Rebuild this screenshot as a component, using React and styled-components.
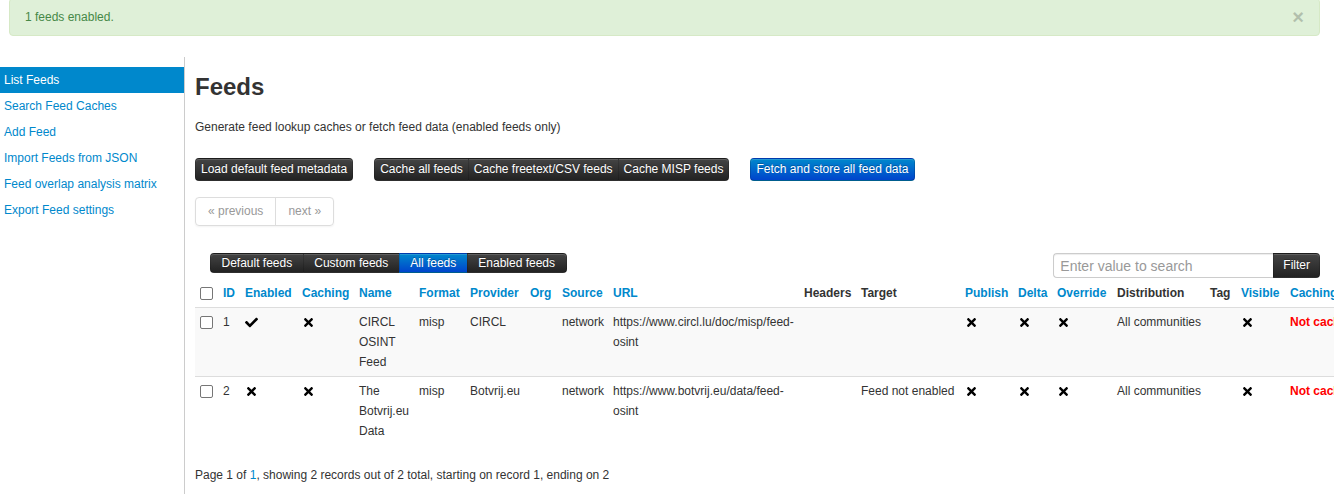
import React from "react"
import styled, { createGlobalStyle, css } from "styled-components"
import { FaCheck, FaTimes } from "react-icons/fa"

const GlobalStyle = createGlobalStyle`
  html, body {
    margin: 0;
    overflow: hidden;
  }
  body {
    font-family: "Liberation Sans", Arial, sans-serif;
    font-size: 12px;
    line-height: 20px;
    color: #333;
    background: #fff;
  }
  * {
    box-sizing: border-box;
  }
`

const Alert = styled("div")`
  display: flex;
  justify-content: space-between;
  align-items: center;
  margin: -2px 14px 21px 9px;
  padding: 8px 15px 8px 15px;
  background: #dff0d8;
  border: 1px solid #d6e9c6;
  border-radius: 4px;
  color: #468847;
`

const Close = styled("span")`
  font-size: 20px;
  font-weight: bold;
  line-height: 20px;
  color: #000;
  opacity: 0.2;
`

const Layout = styled("div")`
  display: flex;
  min-height: calc(100vh - 57px);
`

const Sidebar = styled("ul")`
  flex: 0 0 185px;
  margin: 0;
  padding: 10px 0 0;
  list-style: none;
  border-right: 1px solid #ccc;
`

const NavItem = styled("li")`
  padding: 3px 4px;
  line-height: 20px;
  color: #0088cc;
  ${(p) =>
    p.$active &&
    css`
      background: #0088cc;
      color: #fff;
    `}
`

const Main = styled("div")`
  flex: 1;
  min-width: 0;
  padding: 10px 14px 0 10px;
`

const Title = styled("h2")`
  margin: 0 0 10px;
  font-size: 24px;
  line-height: 40px;
  font-weight: bold;
  color: #333;
`

const Lead = styled("p")`
  margin: 0 0 21px;
`

const ActionBar = styled("div")`
  display: flex;
  gap: 21px;
  align-items: center;
`

const Btn = styled("span")`
  display: inline-block;
  padding: 0 5px;
  height: ${(p) => p.$h || 23}px;
  line-height: ${(p) => (p.$h || 23) - 2}px;
  color: #fff;
  text-shadow: 0 -1px 0 rgba(0, 0, 0, 0.25);
  white-space: nowrap;
  border: 1px solid rgba(0, 0, 0, 0.15);
  border-bottom-color: rgba(0, 0, 0, 0.3);
  border-radius: 4px;
  background-image: ${(p) =>
    p.$primary
      ? "linear-gradient(to bottom, #0088cc, #0044cc)"
      : "linear-gradient(to bottom, #444444, #222222)"};
  box-shadow: inset 0 1px 0 rgba(255, 255, 255, 0.15);
`

const BtnGroup = styled("div")`
  display: inline-flex;

  ${Btn} {
    border-radius: 0;
    padding: 0 ${(p) => p.$pad || 5}px;
  }
  ${Btn} + ${Btn} {
    margin-left: -1px;
  }
  ${Btn}:first-child {
    border-radius: 4px 0 0 4px;
  }
  ${Btn}:last-child {
    border-radius: 0 4px 4px 0;
  }
`

const Pager = styled("ul")`
  display: inline-flex;
  margin: 16px 0 0;
  padding: 0;
  list-style: none;
  border: 1px solid #ddd;
  border-radius: 4px;
  box-shadow: 0 1px 2px rgba(0, 0, 0, 0.05);
`

const PagerItem = styled("li")`
  padding: 3px 12px 4px;
  line-height: 20px;
  color: #999;
  & + & {
    border-left: 1px solid #ddd;
  }
`

const Toolbar = styled("div")`
  display: flex;
  justify-content: space-between;
  align-items: flex-start;
  margin-top: 27px;
  padding-left: 15px;
`

const Search = styled("div")`
  display: flex;
`

const SearchInput = styled("input")`
  width: 220px;
  height: 25px;
  padding: 2px 6px;
  font-family: "Liberation Sans", Arial, sans-serif;
  font-size: 14px;
  color: #555;
  border: 1px solid #ccc;
  border-right: 0;
  border-radius: 4px 0 0 4px;
  box-shadow: inset 0 1px 1px rgba(0, 0, 0, 0.075);
  outline: none;
  &::placeholder {
    color: #999;
  }
`

const FilterBtn = styled(Btn)`
  padding: 0 9px;
  border-radius: 0 4px 4px 0;
`

const Table = styled("table")`
  width: 1180px;
  margin-top: 1px;
  table-layout: fixed;
  border-collapse: collapse;
`

const Col = styled("col")`
  width: ${(p) => p.$w}px;
`

const Th = styled("th")`
  padding: 4px 5px;
  text-align: left;
  vertical-align: bottom;
  font-weight: bold;
  white-space: nowrap;
  overflow: hidden;
  color: ${(p) => (p.$sort ? "#0088cc" : "#333")};
`

const Row = styled("tr")`
  background: ${(p) => (p.$striped ? "#f9f9f9" : "#fff")};
  border-top: 1px solid #ddd;
`

const Td = styled("td")`
  padding: 4px 5px;
  vertical-align: top;
  line-height: 20px;
  overflow: hidden;
  ${(p) =>
    p.$nowrap &&
    css`
      white-space: nowrap;
    `}
`

const Box = styled("span")`
  display: inline-block;
  width: 13px;
  height: 13px;
  margin-top: 4px;
  vertical-align: top;
  border: 1px solid #767676;
  border-radius: 2px;
  background: #fff;
`

const Icon = styled("span")`
  display: inline-flex;
  align-items: center;
  height: 20px;
  color: #000;
`

const NotCached = styled("span")`
  color: #ff0000;
  font-weight: bold;
  white-space: nowrap;
`

const Footer = styled("p")`
  margin: 20px 0 0;
`

const Link = styled("span")`
  color: #0088cc;
`

const columns = [
  { w: 23, label: null },
  { w: 22, label: "ID", sort: true },
  { w: 57, label: "Enabled", sort: true },
  { w: 57, label: "Caching", sort: true },
  { w: 60, label: "Name", sort: true },
  { w: 51, label: "Format", sort: true },
  { w: 60, label: "Provider", sort: true },
  { w: 32, label: "Org", sort: true },
  { w: 51, label: "Source", sort: true },
  { w: 191, label: "URL", sort: true },
  { w: 57, label: "Headers" },
  { w: 104, label: "Target" },
  { w: 53, label: "Publish", sort: true },
  { w: 39, label: "Delta", sort: true },
  { w: 60, label: "Override", sort: true },
  { w: 93, label: "Distribution" },
  { w: 31, label: "Tag" },
  { w: 49, label: "Visible", sort: true },
  { w: 90, label: "Caching", sort: true },
]

const feeds = [
  {
    id: 1,
    enabled: true,
    name: "CIRCL OSINT Feed",
    provider: "CIRCL",
    url: "https://www.circl.lu/doc/misp/feed-osint",
    target: "",
  },
  {
    id: 2,
    enabled: false,
    name: "The Botvrij.eu Data",
    provider: "Botvrij.eu",
    url: "https://www.botvrij.eu/data/feed-osint",
    target: "Feed not enabled",
  },
]

const Check = () => (
  <Icon>
    <FaCheck size={13} />
  </Icon>
)

const Cross = () => (
  <Icon>
    <FaTimes size={13} />
  </Icon>
)

const navItems = [
  "List Feeds",
  "Search Feed Caches",
  "Add Feed",
  "Import Feeds from JSON",
  "Feed overlap analysis matrix",
  "Export Feed settings",
]

const App = () => {
  return (
    <>
      <GlobalStyle />
      <Alert>
        1 feeds enabled.
        <Close>×</Close>
      </Alert>
      <Layout>
        <Sidebar>
          {navItems.map((item, i) => (
            <NavItem key={item} $active={i === 0}>
              {item}
            </NavItem>
          ))}
        </Sidebar>
        <Main>
          <Title>Feeds</Title>
          <Lead>
            Generate feed lookup caches or fetch feed data (enabled feeds only)
          </Lead>
          <ActionBar>
            <Btn>Load default feed metadata</Btn>
            <BtnGroup>
              <Btn>Cache all feeds</Btn>
              <Btn>Cache freetext/CSV feeds</Btn>
              <Btn>Cache MISP feeds</Btn>
            </BtnGroup>
            <Btn $primary>Fetch and store all feed data</Btn>
          </ActionBar>
          <Pager>
            <PagerItem>« previous</PagerItem>
            <PagerItem>next »</PagerItem>
          </Pager>
          <Toolbar>
            <BtnGroup $pad={10.5}>
              <Btn $h={20}>Default feeds</Btn>
              <Btn $h={20}>Custom feeds</Btn>
              <Btn $h={20} $primary>
                All feeds
              </Btn>
              <Btn $h={20}>Enabled feeds</Btn>
            </BtnGroup>
            <Search>
              <SearchInput placeholder="Enter value to search" />
              <FilterBtn $h={25}>Filter</FilterBtn>
            </Search>
          </Toolbar>
          <Table>
            <colgroup>
              {columns.map((c, i) => (
                <Col key={i} $w={c.w} />
              ))}
            </colgroup>
            <thead>
              <tr>
                {columns.map((c, i) => (
                  <Th key={i} $sort={c.sort}>
                    {c.label === null ? <Box /> : c.label}
                  </Th>
                ))}
              </tr>
            </thead>
            <tbody>
              {feeds.map((f, i) => (
                <Row key={f.id} $striped={i === 0}>
                  <Td>
                    <Box />
                  </Td>
                  <Td>{f.id}</Td>
                  <Td>{f.enabled ? <Check /> : <Cross />}</Td>
                  <Td>
                    <Cross />
                  </Td>
                  <Td>{f.name}</Td>
                  <Td>misp</Td>
                  <Td>{f.provider}</Td>
                  <Td></Td>
                  <Td>network</Td>
                  <Td>{f.url}</Td>
                  <Td></Td>
                  <Td $nowrap>{f.target}</Td>
                  <Td>
                    <Cross />
                  </Td>
                  <Td>
                    <Cross />
                  </Td>
                  <Td>
                    <Cross />
                  </Td>
                  <Td $nowrap>All communities</Td>
                  <Td></Td>
                  <Td>
                    <Cross />
                  </Td>
                  <Td>
                    <NotCached>Not cached</NotCached>
                  </Td>
                </Row>
              ))}
            </tbody>
          </Table>
          <Footer>
            Page 1 of <Link>1</Link>, showing 2 records out of 2 total, starting
            on record 1, ending on 2
          </Footer>
        </Main>
      </Layout>
    </>
  )
}

export default App
